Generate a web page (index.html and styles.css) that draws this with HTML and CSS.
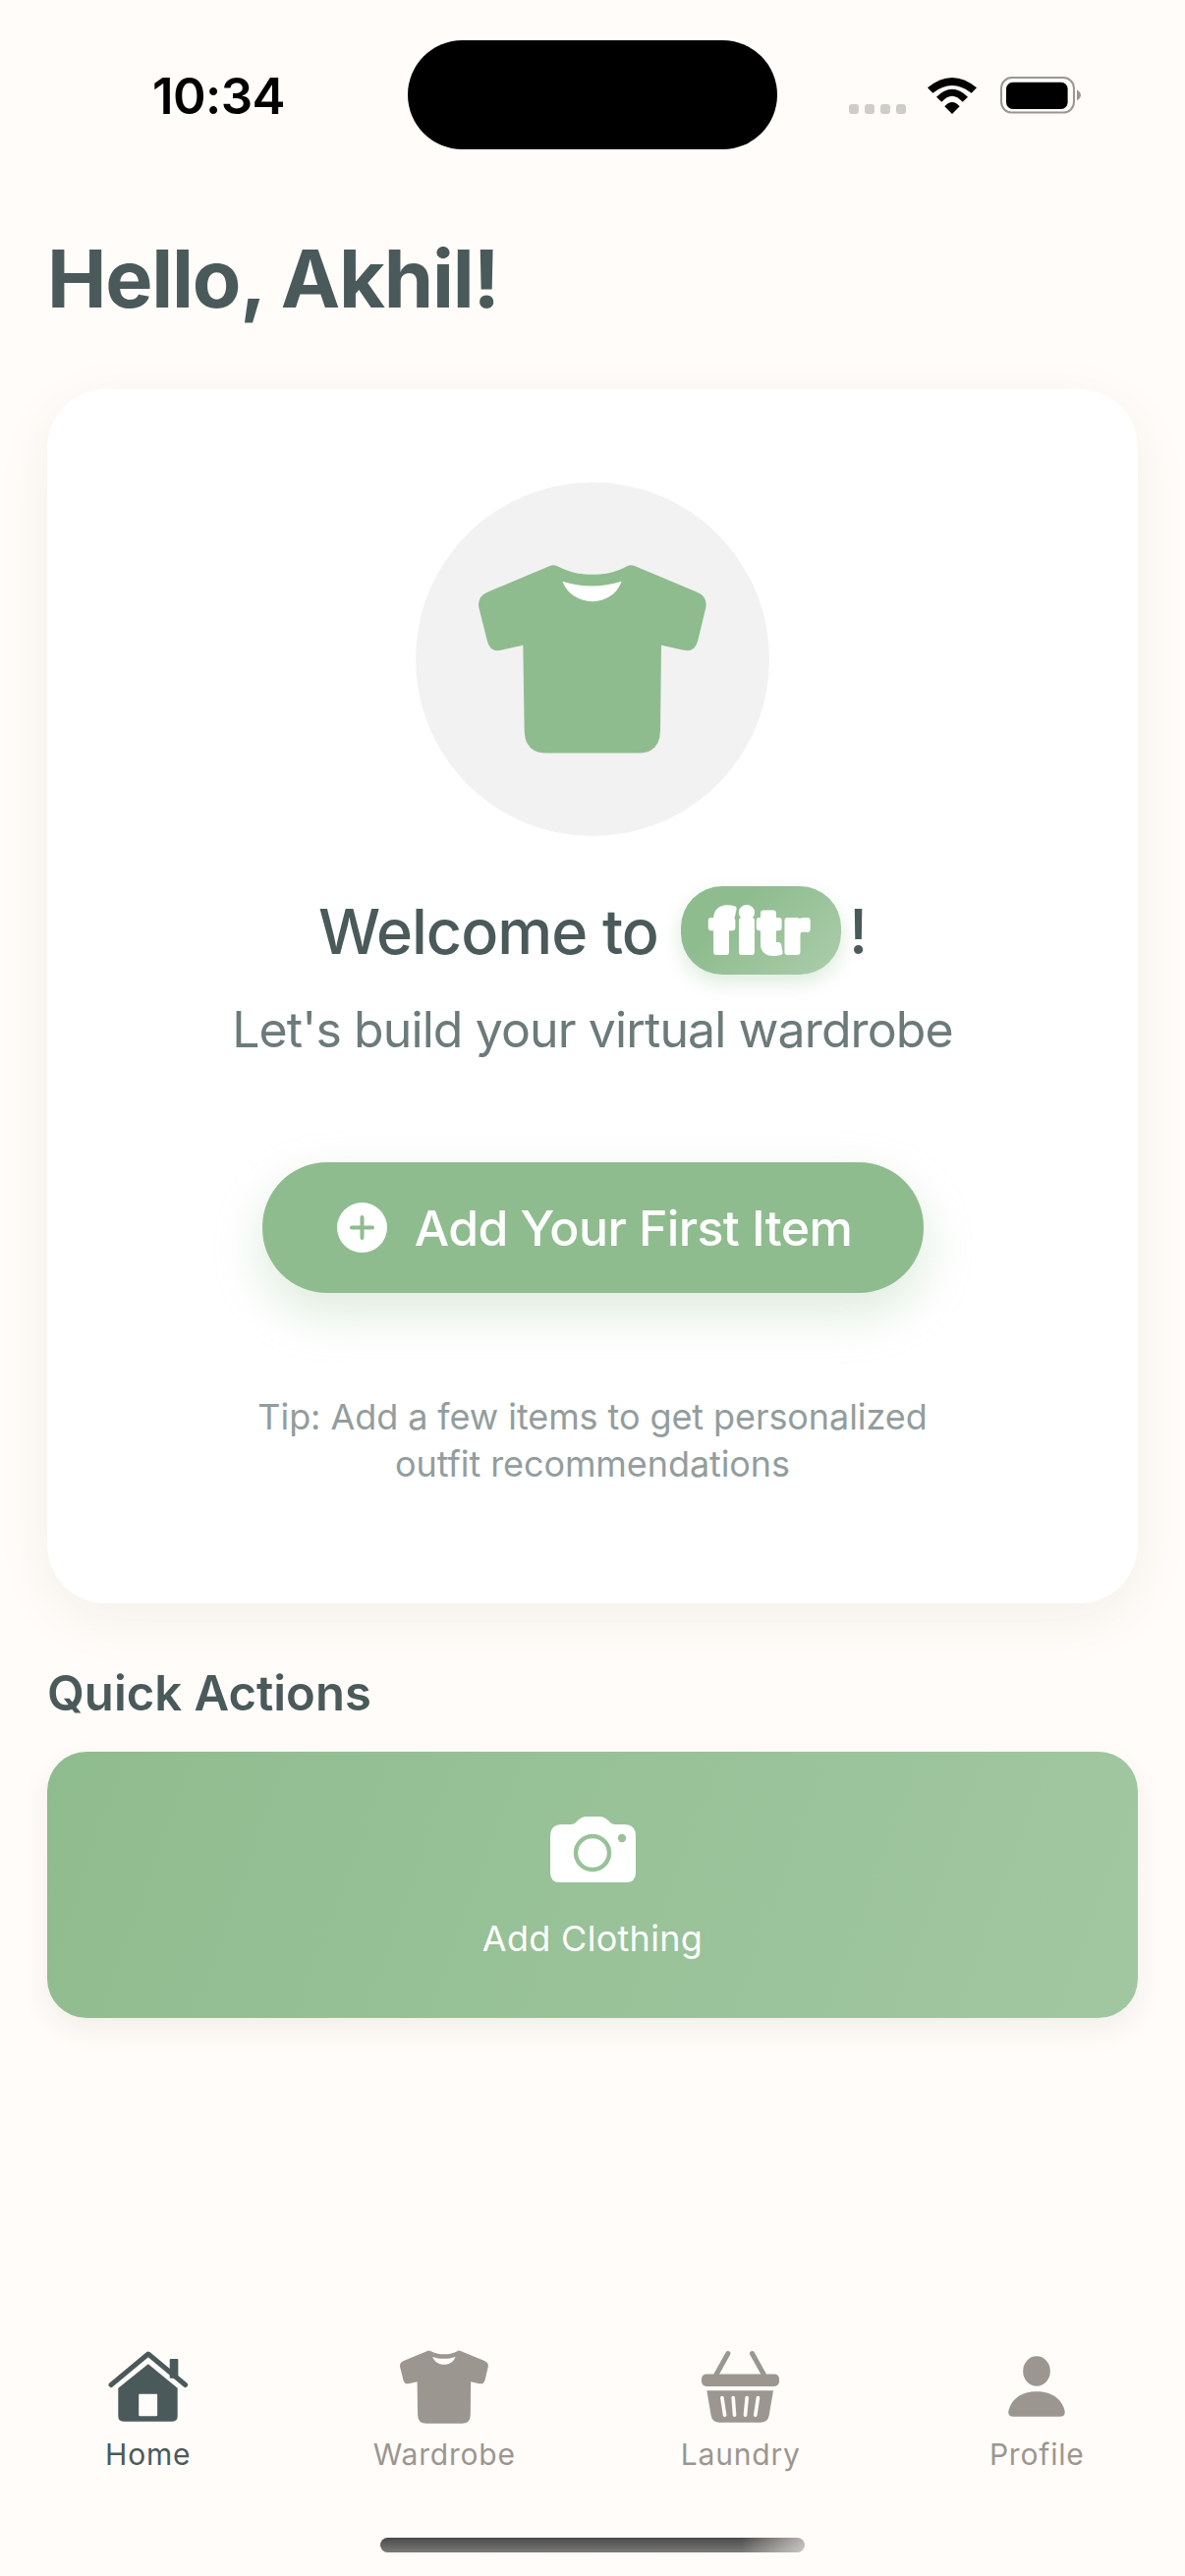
FILE: index.html
```html
<!DOCTYPE html>
<html lang="en">
<head>
    <meta charset="UTF-8">
    <meta name="viewport" content="width=device-width, initial-scale=1.0">
    <title>fitr</title>
    <link rel="stylesheet" href="styles.css">
</head>
<body>
    <svg class="sprites" width="0" height="0">
        <symbol id="shirt" viewBox="262 313 696 578">
            <path fill="currentColor" d="M478 319 Q490 313 503 319 C535 336 570 345 610 345 C650 345 685 336 716 319 Q727 313 740 319 L928 398 Q962 412 956 446 L932 545 Q924 583 888 576 L820 561 L817 822 Q816 890 750 890 L470 890 Q403 890 402 822 L398 561 L330 576 Q296 583 288 545 L263 446 Q257 412 291 398 Z"/>
            <path class="shirt-neck" d="M518 366 C575 385 640 385 699 366 C685 405 650 427 610 427 C570 427 533 405 518 366 Z"/>
        </symbol>
    </svg>

    <div class="status-bar">
        <div class="time">10:34</div>
        <div class="island"></div>
        <div class="status-icons">
            <div class="signal"><span></span><span></span><span></span><span></span></div>
            <svg class="wifi" viewBox="316 87 150 111">
                <path d="M316 118 Q391 56 466 118 L450 134 Q391 88 332 134 Z"/>
                <path d="M343 146 Q391 98 439 146 L423 161 Q391 125 359 161 Z"/>
                <path d="M368 175 Q391 149 414 175 L391 198 Z"/>
            </svg>
            <svg class="battery" viewBox="535 85 245 113">
                <rect x="538" y="88" width="221" height="106" rx="32" fill="none" stroke="#999793" stroke-width="6"/>
                <rect x="553" y="102" width="187" height="81" rx="20" fill="#000"/>
                <path d="M768 125 Q780 132 780 141 Q780 150 768 158 Z" fill="#999793"/>
            </svg>
        </div>
    </div>

    <main class="content">
        <h1 class="greeting">Hello, Akhil!</h1>

        <section class="welcome-card">
            <div class="shirt-circle">
                <svg class="shirt-big"><use href="#shirt"/></svg>
            </div>
            <div class="welcome-title">
                <span class="welcome-text">Welcome to</span>
                <span class="logo-pill">
                    <svg class="logo-text" viewBox="0 0 163 90"><text x="82" y="67">fitr</text></svg>
                </span>
                <span class="welcome-text">!</span>
            </div>
            <p class="welcome-sub">Let's build your virtual wardrobe</p>
            <button class="add-button">
                <svg class="plus-icon" viewBox="0 0 51 51">
                    <circle cx="25.5" cy="25.5" r="25.5" fill="#fff"/>
                    <path d="M25.5 15 V36 M15 25.5 H36" stroke="#8fbc8f" stroke-width="4" stroke-linecap="round"/>
                </svg>
                Add Your First Item
            </button>
            <p class="tip">Tip: Add a few items to get personalized<br>outfit recommendations</p>
        </section>

        <h2 class="section-title">Quick Actions</h2>
        <button class="action-card">
            <svg class="camera" viewBox="560 1849 87 67">
                <path fill="#fff" d="M572 1857 H581 Q584 1857 586 1855 L588 1853 Q592 1849 597 1849 H610 Q615 1849 619 1853 L621 1855 Q623 1857 626 1857 H635 Q647 1857 647 1869 V1906 Q647 1916 637 1916 H570 Q560 1916 560 1906 V1869 Q560 1857 572 1857 Z"/>
                <circle cx="603" cy="1886" r="17" fill="#fff" stroke="#98c298" stroke-width="4.5"/>
                <circle cx="633" cy="1871" r="4.2" fill="#98c298"/>
            </svg>
            <span>Add Clothing</span>
        </button>
    </main>

    <nav class="tab-bar">
        <div class="tab tab-active">
            <div class="tab-icon">
                <svg class="home-icon" viewBox="150 98 245 217">
                    <rect x="338" y="122" width="26" height="60" rx="3" fill="currentColor"/>
                    <path d="M158 202 L272 107 L386 202" fill="none" stroke="currentColor" stroke-width="15" stroke-linecap="round" stroke-linejoin="round"/>
                    <path fill="currentColor" d="M272 138 L362 212 V298 Q362 314 346 314 H196 Q180 314 180 298 V212 Z"/>
                    <rect x="243" y="230" width="57" height="68" rx="3" fill="#fffcf9"/>
                </svg>
            </div>
            <span>Home</span>
        </div>
        <div class="tab">
            <div class="tab-icon">
                <svg class="shirt-small"><use href="#shirt"/></svg>
            </div>
            <span>Wardrobe</span>
        </div>
        <div class="tab">
            <div class="tab-icon">
                <svg class="basket-icon" viewBox="222 93 238 219">
                    <path d="M303 100 L267 165 M377 100 L413 165" stroke="currentColor" stroke-width="15" stroke-linecap="round"/>
                    <rect x="222" y="163" width="238" height="38" rx="15" fill="currentColor"/>
                    <path fill="currentColor" d="M238 214 H442 L429 290 Q425 312 402 312 H278 Q255 312 251 290 Z"/>
                    <path d="M285 236 L293 289 M319 236 L323 289 M361 236 L356 289 M395 236 L387 289" stroke="#fffcf9" stroke-width="11" stroke-linecap="round"/>
                </svg>
            </div>
            <span>Laundry</span>
        </div>
        <div class="tab">
            <div class="tab-icon">
                <svg class="profile-icon" viewBox="1157 115 174 185">
                    <ellipse cx="1244" cy="161" rx="41.5" ry="45.5" fill="currentColor"/>
                    <path fill="currentColor" d="M1158 284 C1165 245 1200 223 1244 223 C1288 223 1323 245 1330 284 Q1332 300 1315 300 H1173 Q1156 300 1158 284 Z"/>
                </svg>
            </div>
            <span>Profile</span>
        </div>
    </nav>
    <div class="home-indicator"></div>
</body>
</html>
```

FILE: styles.css
```css
* {
    box-sizing: border-box;
}
html, body {
    margin: 0;
    padding: 0;
}
body {
    width: 1206px;
    height: 2622px;
    overflow: hidden;
    display: flex;
    flex-direction: column;
    background-color: #fffcf9;
    font-family: Inter, "Liberation Sans", sans-serif;
    color: #4a5a5a;
}
.sprites {
    display: block;
    height: 0;
}
.shirt-neck {
    fill: var(--neck, #fff);
}

/* status bar */
.status-bar {
    display: grid;
    grid-template-columns: 415px 376px 1fr;
    align-items: center;
    height: 111px;
    margin-top: 41px;
}
.time {
    padding: 2px 0 0 155px;
    font-size: 51px;
    font-weight: 600;
    color: #000;
    letter-spacing: -0.6px;
}
.island {
    height: 111px;
    border-radius: 56px;
    background-color: #000;
}
.status-icons {
    display: flex;
    align-items: flex-end;
    justify-content: flex-end;
    height: 38px;
    padding-right: 106px;
}
.signal {
    display: flex;
    gap: 6px;
}
.signal span {
    width: 10px;
    height: 10px;
    border-radius: 3px;
    background-color: #d0ccc8;
}
.wifi {
    width: 50px;
    height: 37px;
    margin-left: 22px;
}
.battery {
    width: 82px;
    height: 38px;
    margin-left: 24px;
}

/* main */
.content {
    flex: 1;
    padding: 0 48px;
}
.greeting {
    margin: 82px 0 0 0;
    font-size: 81px;
    line-height: 100px;
    font-weight: 700;
    letter-spacing: -1.2px;
}
.welcome-card {
    height: 1236px;
    margin-top: 62px;
    padding-top: 95px;
    display: flex;
    flex-direction: column;
    align-items: center;
    background-color: #fff;
    border-radius: 60px;
    box-shadow: 0 16px 60px rgba(74, 60, 40, 0.06);
}
.shirt-circle {
    width: 360px;
    height: 360px;
    display: flex;
    align-items: center;
    justify-content: center;
    border-radius: 50%;
    background-color: #f2f2f2;
}
.shirt-big {
    width: 232px;
    height: 193px;
    margin-top: -2px;
    color: #8fbc8f;
}
.welcome-title {
    display: flex;
    align-items: center;
    margin-top: 51px;
    font-size: 63px;
    font-weight: 500;
    letter-spacing: -1px;
}
.welcome-text {
    padding-top: 2px;
}
.logo-pill {
    display: flex;
    width: 163px;
    height: 90px;
    margin: 0 8px 0 23px;
    border-radius: 42px;
    background: linear-gradient(135deg, #8fbc8f 30%, #abcdab 100%);
    box-shadow: 0 8px 20px rgba(143, 188, 143, 0.3);
}
.logo-text {
    width: 163px;
    height: 90px;
}
.logo-text text {
    fill: #fff;
    stroke: #fff;
    stroke-width: 6px;
    stroke-linejoin: round;
    font-size: 58px;
    font-weight: 800;
    font-variant-ligatures: none;
    letter-spacing: 4px;
    text-anchor: middle;
}
.welcome-sub {
    margin: 24px 0 0 0;
    font-size: 50px;
    line-height: 64px;
    font-weight: 400;
    letter-spacing: -0.9px;
    color: #6c7a7a;
}
.add-button {
    display: flex;
    align-items: center;
    justify-content: center;
    gap: 28px;
    width: 673px;
    height: 133px;
    margin-top: 103px;
    padding: 0 0 0 4px;
    border: none;
    border-radius: 66px;
    background-color: #8fbc8f;
    box-shadow: 0 20px 50px rgba(143, 188, 143, 0.3);
    color: #fff;
    font-family: inherit;
    font-size: 50px;
    font-weight: 500;
    letter-spacing: -0.6px;
}
.plus-icon {
    width: 51px;
    height: 51px;
}
.tip {
    margin: 102px 0 0 0;
    text-align: center;
    font-size: 36px;
    line-height: 48px;
    letter-spacing: -0.08px;
    color: #939d9d;
}
.section-title {
    margin: 62px 0 0 0;
    font-size: 49px;
    line-height: 60px;
    font-weight: 600;
}
.action-card {
    display: flex;
    flex-direction: column;
    align-items: center;
    width: 100%;
    height: 271px;
    margin-top: 29px;
    padding: 66px 0 0 0;
    border: none;
    border-radius: 40px;
    background: linear-gradient(110deg, #8fbc8f 0%, #a1c7a1 100%);
    box-shadow: 0 12px 30px rgba(74, 60, 40, 0.07);
    color: #fff;
    font-family: inherit;
    font-size: 36px;
    font-weight: 400;
}
.camera {
    width: 87px;
    height: 67px;
}
.action-card span {
    margin-top: 35px;
    line-height: 44px;
    letter-spacing: 0.3px;
}

/* tab bar */
.tab-bar {
    display: grid;
    grid-template-columns: repeat(4, 1fr);
    color: #9b9690;
}
.tab {
    display: flex;
    flex-direction: column;
    align-items: center;
    --neck: #fffcf9;
    font-size: 30px;
    line-height: 36px;
    letter-spacing: 0.8px;
}
.tab-active {
    color: #4a5a5a;
}
.tab-icon {
    display: flex;
    align-items: center;
    justify-content: center;
    height: 76px;
    margin-bottom: 13px;
}
.home-icon {
    width: 82px;
    height: 72px;
}
.shirt-small {
    width: 90px;
    height: 75px;
}
.basket-icon {
    width: 79px;
    height: 73px;
}
.profile-icon {
    width: 58px;
    height: 62px;
}
.home-indicator {
    flex: none;
    width: 432px;
    height: 15px;
    margin: 67px 0 24px 387px;
    border-radius: 8px;
    background:
        linear-gradient(90deg, rgba(255, 252, 249, 0) 85%, rgba(255, 252, 249, 0.6) 100%),
        linear-gradient(180deg, #4a4a4a, #7a7a78);
}
```
